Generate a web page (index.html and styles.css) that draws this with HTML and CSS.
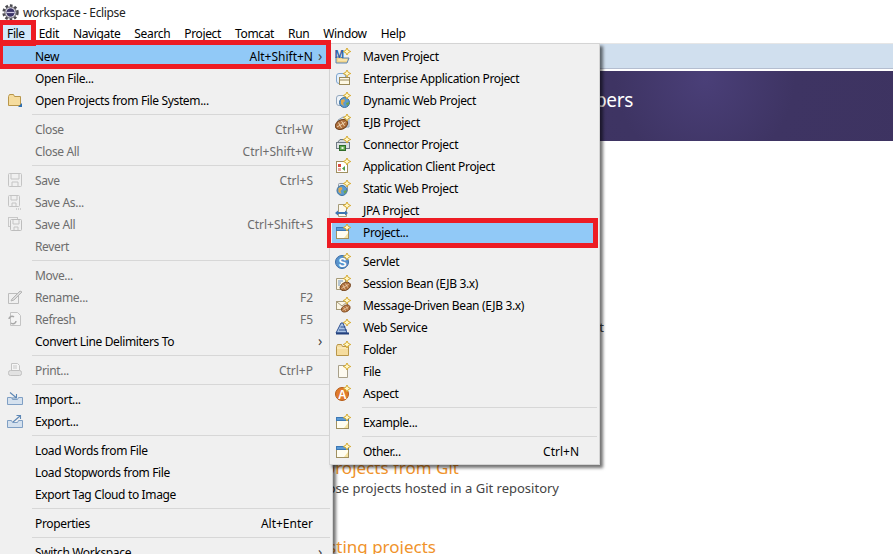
FILE: index.html
```html
<!DOCTYPE html>
<html lang="en">
<head>
    <meta charset="UTF-8">
    <title>workspace - Eclipse</title>
    <link rel="stylesheet" href="styles.css">
</head>
<body>
    <svg class="sprites" width="0" height="0">
        <symbol id="star" viewBox="0 0 16 16"><path d="M12 0l1.200 2.300 2.500 1.200-2.500 1.200L12 7l-1.200-2.300-2.500-1.200 2.500-1.200z" fill="#fff8c8" stroke="#d2a21e" stroke-width=".9"/></symbol>
        <symbol id="bean" viewBox="0 0 16 16"><ellipse cx="8" cy="10.500" rx="6.500" ry="4.500" transform="rotate(-28 8 10.500)" fill="#b0703c" stroke="#71431f"/><path d="M3.500 13L12 8M5 8.500l3 5.500M8 7l3 5" stroke="#ecd0ac" fill="none"/></symbol>
        <symbol id="globe" viewBox="0 0 16 16"><circle cx="9.500" cy="10.500" r="5" fill="#5b9bd0" stroke="#3d6f9d"/><path d="M6 8l3-1 1 2-2 2 1 3-3-2z" fill="#e2a94a"/><path d="M11 11l3-1v2l-2 2z" fill="#6fa54e"/></symbol>
        <symbol id="i-maven" viewBox="0 0 16 16"><path d="M1 9h5l1 1h7l-2 5H1z" fill="#f1d48a" stroke="#5d85b5"/><path d="M3 12h9" stroke="#fff3cc"/><text x="-.5" y="9.500" class="glyph-m">M</text><use href="#star"/></symbol>
        <symbol id="i-ear" viewBox="0 0 16 16"><rect x="1.500" y="3.500" width="9" height="10" rx="2.500" fill="#e6f0fa" stroke="#7fa6cf"/><rect x="4.500" y="7.500" width="10" height="7" fill="#fdf8e4" stroke="#9a8a5a"/><path d="M5 10h9" stroke="#9a8a5a"/><use href="#star"/></symbol>
        <symbol id="i-web" viewBox="0 0 16 16"><rect x="1.500" y="3.500" width="9" height="10" rx="2.500" fill="#eef3f8" stroke="#93a8bf"/><use href="#globe"/><use href="#star"/></symbol>
        <symbol id="i-ejb" viewBox="0 0 16 16"><path d="M3 6l5-3h6v10H3z" fill="#d9e2ec" stroke="#8fa3b8"/><use href="#bean" transform="translate(-1.500 0)"/><use href="#star"/></symbol>
        <symbol id="i-conn" viewBox="0 0 16 16"><path d="M2.500 6.500L5 3.500h6l2.500 3z" fill="#d6dade" stroke="#6f7983"/><rect x="1.500" y="6.500" width="13" height="6" fill="#dde1e5" stroke="#6f7983"/><rect x="4.500" y="9.500" width="6" height="5" fill="#5fa84f" stroke="#2f6b2a"/><rect x="6.500" y="11" width="2" height="2" fill="#e8f5e0"/><use href="#star"/></symbol>
        <symbol id="i-client" viewBox="0 0 16 16"><rect x="1.500" y="3.500" width="11" height="11" fill="#fff" stroke="#a09060"/><rect x="3" y="6" width="3" height="3" fill="#d94a3d"/><path d="M10 8v5l-3-2.500z" fill="#4f9c48"/><rect x="3" y="10" width="3" height="3" fill="#e7a6a0"/><use href="#star"/></symbol>
        <symbol id="i-static" viewBox="0 0 16 16"><rect x="3.500" y="3.500" width="9" height="8" rx="1" fill="#e9edf2" stroke="#8f99a5"/><use href="#globe" transform="translate(-2.500 0)"/><use href="#star"/></symbol>
        <symbol id="i-jpa" viewBox="0 0 16 16"><path d="M3.500 2.500h8v12h-8z" fill="#fbf8ee" stroke="#a59a78"/><path d="M0 11l3-2.500v1.500h7V8.500l3 2.500-3 2.500V12H3v1.500z" fill="#3d74b0"/><use href="#star"/></symbol>
        <symbol id="i-proj" viewBox="0 0 16 16"><rect x="1.500" y="3.500" width="12" height="11" fill="#fffdf0" stroke="#a09060"/><rect x="1.500" y="3.500" width="12" height="3" fill="#5a9ad6" stroke="#3d78b4"/><path d="M9 14l4-5v5z" fill="#f5e3a0"/><use href="#star"/></symbol>
        <symbol id="i-servlet" viewBox="0 0 16 16"><circle cx="7" cy="9" r="6.500" fill="#5a93cc" stroke="#3a6ea6"/><text x="3.500" y="13.500" class="glyph-s">S</text><use href="#star"/></symbol>
        <symbol id="i-session" viewBox="0 0 16 16"><path d="M1.500 3.500h9v11h-9z" fill="#fbf6e6" stroke="#a59a78"/><path d="M3 6h5M3 8h3M3 10h2" stroke="#6d93bd"/><use href="#bean" transform="translate(3.500 2.500) scale(.85)"/><use href="#star"/></symbol>
        <symbol id="i-mdb" viewBox="0 0 16 16"><rect x="1.500" y="4.500" width="11" height="8" fill="#fbf6e6" stroke="#a59a78"/><path d="M2 5l5 4 5-4" fill="none" stroke="#a59a78"/><use href="#bean" transform="translate(5 4) scale(.72)"/><use href="#star"/></symbol>
        <symbol id="i-ws" viewBox="0 0 16 16"><path d="M1 14l5-10h2l4 10z" fill="#a8c2e4" stroke="#2d4f90"/><path d="M1 14.500h13" stroke="#23407d" stroke-width="2"/><path d="M5.500 8h5M4 11h8" stroke="#2d4f90"/><use href="#star"/></symbol>
        <symbol id="i-folder" viewBox="0 0 16 16"><path d="M1.500 5.500l1-2h4l1 2h6v9h-12z" fill="#f5dc9e" stroke="#b8964a"/><path d="M2 7h11" stroke="#fff3cc"/><use href="#star"/></symbol>
        <symbol id="i-file" viewBox="0 0 16 16"><path d="M3.500 2.500h9v12h-9z" fill="#fdfaf0" stroke="#a8a08a"/><use href="#star"/></symbol>
        <symbol id="i-aspect" viewBox="0 0 16 16"><circle cx="7" cy="9" r="6.500" fill="#e17b2d" stroke="#b55b16"/><text x="3" y="13.500" class="glyph-s">A</text><use href="#star"/></symbol>
        <symbol id="i-open" viewBox="0 0 16 16"><path d="M1.500 4.500l1-2h4l1 2h6v9h-12z" fill="#f5dc9e" stroke="#b8964a"/><path d="M11 15l4-4v4z" fill="#2f6fb0"/></symbol>
        <symbol id="i-save" viewBox="0 0 16 16"><rect x="1.500" y="1.500" width="13" height="13" rx="1" fill="#f0f0f0" stroke="#c4c4c4"/><path d="M4 2v5h8V2M5 14v-4h6v4" fill="none" stroke="#c4c4c4"/></symbol>
        <symbol id="i-saveas" viewBox="0 0 16 16"><rect x="1.500" y="1.500" width="11" height="11" rx="1" fill="#f0f0f0" stroke="#c4c4c4"/><path d="M4 2v4h6V2M5 12V9h4v3" fill="none" stroke="#c4c4c4"/><path d="M9 15h1M11 15h1M13 15h1" stroke="#b0b0b0"/></symbol>
        <symbol id="i-saveall" viewBox="0 0 16 16"><rect x="1.500" y="1.500" width="9" height="9" fill="#f0f0f0" stroke="#c8c8c8"/><rect x="3.500" y="3.500" width="11" height="11" rx="1" fill="#f0f0f0" stroke="#bdbdbd"/><path d="M6 4v4h6V4M7 14v-3h4v3" fill="none" stroke="#c4c4c4"/></symbol>
        <symbol id="i-rename" viewBox="0 0 16 16"><path d="M1.500 4.500h10v10h-10z" fill="#f0f0f0" stroke="#bdbdbd"/><path d="M5 10l8-8 2 1-8 8-3 1z" fill="#dcdcdc" stroke="#b5b5b5"/></symbol>
        <symbol id="i-refresh" viewBox="0 0 16 16"><path d="M3.500 1.500h7l3 3v10h-10z" fill="#f4f4f4" stroke="#c4c4c4"/><path d="M2 8a3 3 0 0 1 5-2M9 10a3 3 0 0 1-5 2" fill="none" stroke="#a8a8a8" stroke-width="1.500"/></symbol>
        <symbol id="i-print" viewBox="0 0 16 16"><path d="M4.500 1.500h6l2 2v5h-8z" fill="#f6f6f6" stroke="#c4c4c4"/><rect x="1.500" y="8.500" width="13" height="5" rx="2" fill="#e2e2e2" stroke="#c0c0c0"/><path d="M6 4h4M6 6h4" stroke="#c8c8c8"/></symbol>
        <symbol id="i-import" viewBox="0 0 16 16"><path d="M.5 6.500v7h15v-7h-4l-1 2h-5l-1-2z" fill="#d5e1ee" stroke="#7f9fc4"/><path d="M3 1.500l6 5M5 7h4.500V3" fill="none" stroke="#5d87b5" stroke-width="1.100"/></symbol>
        <symbol id="i-export" viewBox="0 0 16 16"><path d="M.5 7.500v7h15v-7h-4l-1 2h-5l-1-2z" fill="#d5e1ee" stroke="#7f9fc4"/><path d="M6 9l7-6M9.500 2.500H13.500V6" fill="none" stroke="#5d87b5" stroke-width="1.100"/></symbol>
    </svg>

    <div class="titlebar">
        <svg class="logo" viewBox="0 0 17 17">
            <circle cx="8.500" cy="8.500" r="7" fill="#f2f1f5" stroke="#4a4a4f" stroke-width="2.400" stroke-dasharray="2.600 2"/>
            <circle cx="8.500" cy="8.500" r="5.600" fill="none" stroke="#55525c"/>
            <circle cx="8.500" cy="8.500" r="4.200" fill="#3b3568"/>
            <path d="M4.500 8.500h8" stroke="#cfcbe6" stroke-width="1.200"/>
        </svg>
        <span>workspace - Eclipse</span>
    </div>

    <nav class="menubar">
        <span class="menu-title current">File</span>
        <span class="menu-title">Edit</span>
        <span class="menu-title">Navigate</span>
        <span class="menu-title">Search</span>
        <span class="menu-title">Project</span>
        <span class="menu-title">Tomcat</span>
        <span class="menu-title">Run</span>
        <span class="menu-title">Window</span>
        <span class="menu-title">Help</span>
    </nav>

    <div class="tabstrip"></div>
    <header class="banner"><h1>Java EE IDE for Web Developers</h1></header>

    <main class="welcome">
        <p class="peek">Get an overview of the features and what</p>
        <h2 class="first">Checkout projects from Git</h2>
        <p class="desc">Checkout Eclipse projects hosted in a Git repository</p>
        <h2 class="second">Import existing projects</h2>
    </main>

    <div class="menu file-menu">
        <div class="item selected"><span class="ico"></span><span class="label">New</span><span class="key">Alt+Shift+N</span><span class="arrow">›</span></div>
        <div class="item"><span class="ico"></span><span class="label">Open File...</span></div>
        <div class="item"><span class="ico"><svg><use href="#i-open"/></svg></span><span class="label">Open Projects from File System...</span></div>
        <div class="sep"></div>
        <div class="item off"><span class="ico"></span><span class="label">Close</span><span class="key">Ctrl+W</span></div>
        <div class="item off"><span class="ico"></span><span class="label">Close All</span><span class="key">Ctrl+Shift+W</span></div>
        <div class="sep"></div>
        <div class="item off"><span class="ico"><svg><use href="#i-save"/></svg></span><span class="label">Save</span><span class="key">Ctrl+S</span></div>
        <div class="item off"><span class="ico"><svg><use href="#i-saveas"/></svg></span><span class="label">Save As...</span></div>
        <div class="item off"><span class="ico"><svg><use href="#i-saveall"/></svg></span><span class="label">Save All</span><span class="key">Ctrl+Shift+S</span></div>
        <div class="item off"><span class="ico"></span><span class="label">Revert</span></div>
        <div class="sep"></div>
        <div class="item off"><span class="ico"></span><span class="label">Move...</span></div>
        <div class="item off"><span class="ico"><svg><use href="#i-rename"/></svg></span><span class="label">Rename...</span><span class="key">F2</span></div>
        <div class="item off"><span class="ico"><svg><use href="#i-refresh"/></svg></span><span class="label">Refresh</span><span class="key">F5</span></div>
        <div class="item"><span class="ico"></span><span class="label">Convert Line Delimiters To</span><span class="arrow">›</span></div>
        <div class="sep"></div>
        <div class="item off"><span class="ico"><svg><use href="#i-print"/></svg></span><span class="label">Print...</span><span class="key">Ctrl+P</span></div>
        <div class="sep"></div>
        <div class="item"><span class="ico"><svg><use href="#i-import"/></svg></span><span class="label">Import...</span></div>
        <div class="item"><span class="ico"><svg><use href="#i-export"/></svg></span><span class="label">Export...</span></div>
        <div class="sep"></div>
        <div class="item"><span class="ico"></span><span class="label">Load Words from File</span></div>
        <div class="item"><span class="ico"></span><span class="label">Load Stopwords from File</span></div>
        <div class="item"><span class="ico"></span><span class="label">Export Tag Cloud to Image</span></div>
        <div class="sep"></div>
        <div class="item"><span class="ico"></span><span class="label">Properties</span><span class="key">Alt+Enter</span></div>
        <div class="sep"></div>
        <div class="item"><span class="ico"></span><span class="label">Switch Workspace</span><span class="arrow">›</span></div>
    </div>

    <div class="menu new-menu">
        <div class="item"><span class="ico"><svg><use href="#i-maven"/></svg></span><span class="label">Maven Project</span></div>
        <div class="item"><span class="ico"><svg><use href="#i-ear"/></svg></span><span class="label">Enterprise Application Project</span></div>
        <div class="item"><span class="ico"><svg><use href="#i-web"/></svg></span><span class="label">Dynamic Web Project</span></div>
        <div class="item"><span class="ico"><svg><use href="#i-ejb"/></svg></span><span class="label">EJB Project</span></div>
        <div class="item"><span class="ico"><svg><use href="#i-conn"/></svg></span><span class="label">Connector Project</span></div>
        <div class="item"><span class="ico"><svg><use href="#i-client"/></svg></span><span class="label">Application Client Project</span></div>
        <div class="item"><span class="ico"><svg><use href="#i-static"/></svg></span><span class="label">Static Web Project</span></div>
        <div class="item"><span class="ico"><svg><use href="#i-jpa"/></svg></span><span class="label">JPA Project</span></div>
        <div class="item selected"><span class="ico"><svg><use href="#i-proj"/></svg></span><span class="label">Project...</span></div>
        <div class="sep"></div>
        <div class="item"><span class="ico"><svg><use href="#i-servlet"/></svg></span><span class="label">Servlet</span></div>
        <div class="item"><span class="ico"><svg><use href="#i-session"/></svg></span><span class="label">Session Bean (EJB 3.x)</span></div>
        <div class="item"><span class="ico"><svg><use href="#i-mdb"/></svg></span><span class="label">Message-Driven Bean (EJB 3.x)</span></div>
        <div class="item"><span class="ico"><svg><use href="#i-ws"/></svg></span><span class="label">Web Service</span></div>
        <div class="item"><span class="ico"><svg><use href="#i-folder"/></svg></span><span class="label">Folder</span></div>
        <div class="item"><span class="ico"><svg><use href="#i-file"/></svg></span><span class="label">File</span></div>
        <div class="item"><span class="ico"><svg><use href="#i-aspect"/></svg></span><span class="label">Aspect</span></div>
        <div class="sep"></div>
        <div class="item"><span class="ico"><svg><use href="#i-proj"/></svg></span><span class="label">Example...</span></div>
        <div class="sep"></div>
        <div class="item"><span class="ico"><svg><use href="#i-proj"/></svg></span><span class="label">Other...</span><span class="key">Ctrl+N</span></div>
    </div>

    <!-- red annotation boxes drawn on top of the screenshot -->
    <div class="mark mark-file"></div>
    <div class="mark mark-new"></div>
    <div class="mark mark-project"></div>
</body>
</html>
```

FILE: styles.css
```css
html, body {
    margin: 0;
    height: 100%;
    overflow: hidden;
}
body {
    position: relative;
    font-family: "Noto Sans", "Open Sans", sans-serif;
    font-size: 12px;
    letter-spacing: -0.35px;
    color: #000;
    background-color: #fff;
}
.sprites {
    position: absolute;
}
.glyph-m {
    font: bold 11.5px "Liberation Sans", sans-serif;
    letter-spacing: 0;
    fill: #2f62a8;
}
.glyph-s {
    font: bold 12px "Liberation Sans", sans-serif;
    letter-spacing: 0;
    fill: #fff;
}

.titlebar {
    height: 22px;
    box-sizing: border-box;
    padding: 2px 0 0 2px;
    display: flex;
    align-items: center;
    gap: 4px;
    color: #222;
}
.logo {
    width: 17px;
    height: 17px;
}
.menubar {
    height: 21px;
    box-sizing: border-box;
    padding-top: 2px;
    display: flex;
    align-items: center;
}
.menu-title {
    padding: 0 7px;
    line-height: 19px;
}
.menu-title.current {
    background-color: #d1e8fa;
}

.tabstrip {
    height: 26px;
    box-sizing: border-box;
    background-color: #d0dfee;
    border-top: 1px solid #e6e6e6;
    border-bottom: 1px solid #b4bed0;
}
.banner {
    height: 70px;
    box-sizing: border-box;
    margin-top: 2px;
    padding-top: 6px;
    background: radial-gradient(circle at 705px 8px, #4a3f78 0, #3e3463 90px, #3a3058 100%);
}
.banner h1 {
    width: 633px;
    margin: 0;
    padding-top: 10px;
    font-size: 19px;
    line-height: 26px;
    font-weight: 400;
    text-align: right;
    color: #fff;
    white-space: nowrap;
}

/* text runs out from under the menus, so each line is set by where it ends */
.welcome {
    text-align: right;
    color: #444;
}
.welcome p {
    margin: 0;
    font-size: 13px;
    line-height: 18px;
    letter-spacing: 0;
    white-space: nowrap;
}
.welcome h2 {
    margin: 0;
    font-size: 17px;
    font-weight: 400;
    line-height: 24px;
    letter-spacing: 0;
    color: #f0932b;
    white-space: nowrap;
}
.welcome .peek {
    width: 604px;
    margin-top: 177px;
}
.welcome .first {
    width: 459px;
    margin-top: 120px;
}
.welcome .desc {
    width: 559px;
    margin-top: -1px;
}
.welcome .second {
    width: 436px;
    margin-top: 38px;
}

.menu {
    position: absolute;
    top: 43px;
    box-sizing: border-box;
    padding: 1px 2px 2px;
    background-color: #f0f0f0;
    border: 1px solid #d4d4d4;
    box-shadow: 3px 3px 3px rgba(0, 0, 0, 0.55);
}
.file-menu {
    left: -1px;
    width: 334px;
}
.new-menu {
    left: 329px;
    width: 271px;
}
.item {
    height: 22px;
    display: flex;
    align-items: center;
    white-space: nowrap;
}
.item.selected {
    background-color: #91c9f7;
}
.item.off {
    color: #6d6d6d;
}
.ico {
    width: 33px;
    height: 16px;
    padding-left: 5px;
    box-sizing: border-box;
    flex: none;
}
.ico svg {
    display: block;
    width: 16px;
    height: 16px;
}
.label {
    flex: 1;
}
.key {
    margin-right: 17px;
    letter-spacing: 0;
}
.arrow {
    position: absolute;
    right: 10px;
    font-size: 14px;
    line-height: 22px;
    color: #444;
}
.sep {
    height: 7px;
    margin-left: 30px;
    position: relative;
}
.sep::after {
    content: "";
    position: absolute;
    left: 0;
    right: 0;
    top: 3px;
    height: 1px;
    background-color: #d7d7d7;
}
.new-menu .ico {
    width: 31px;
    padding-left: 3px;
}
.new-menu .key {
    margin-right: 18px;
}

.mark {
    position: absolute;
    box-sizing: border-box;
    border: 5px solid #ed1c24;
}
.mark-file {
    left: 0;
    top: 20px;
    width: 36px;
    height: 26px;
    border-left-width: 3px;
}
.mark-new {
    left: 0;
    top: 40px;
    width: 331px;
    height: 29px;
    border-left-width: 3px;
}
.mark-project {
    left: 327px;
    top: 218px;
    width: 271px;
    height: 30px;
    border-left-width: 4px;
}
```
